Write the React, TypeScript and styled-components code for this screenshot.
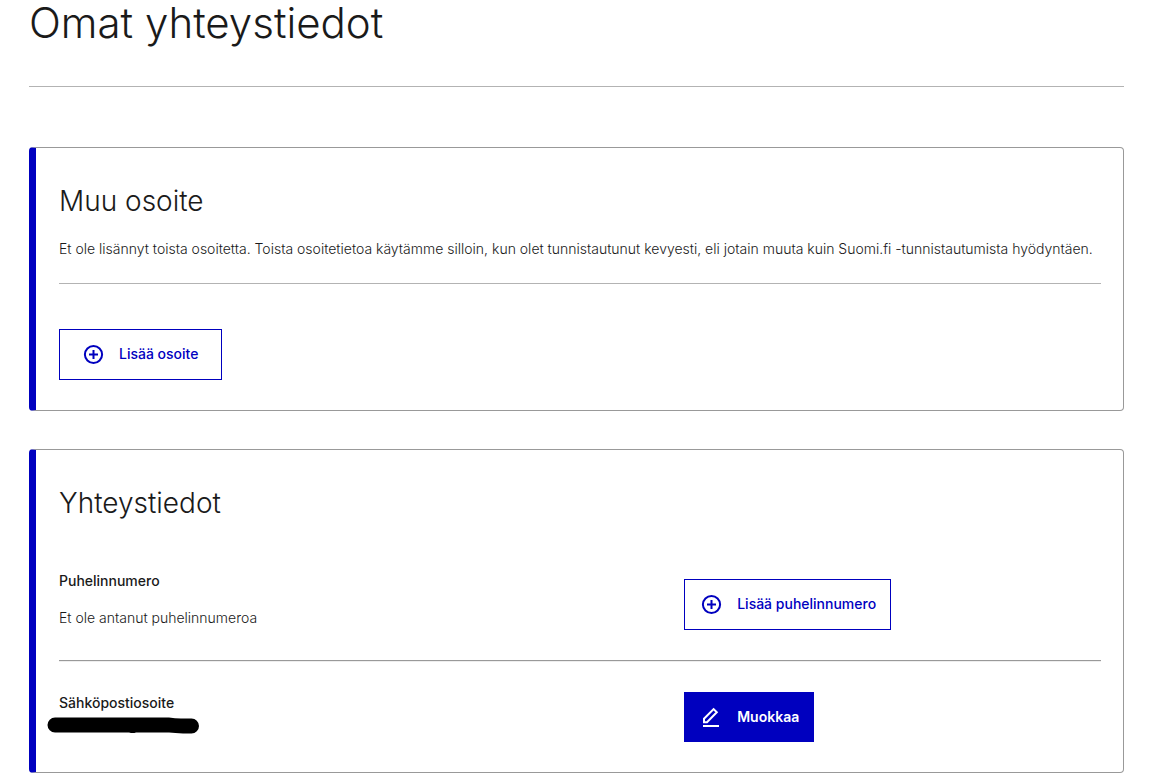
import React from "react";
import styled, { createGlobalStyle } from "styled-components";

const blue = "#0000bf";

const GlobalStyle = createGlobalStyle`
  * { box-sizing: border-box; }
  body {
    margin: 0;
    background: #fff;
    color: #1a1a1a;
    font-family: Inter, "Liberation Sans", sans-serif;
    font-size: 14px;
    line-height: 22px;
  }
`;

const Page = styled.main`
  padding: 0 28px 9px 29px;
`;

const PageTitle = styled.h1`
  margin: 0;
  padding-bottom: 40px;
  border-bottom: 1px solid #b3b3b3;
  font-size: 42px;
  font-weight: 300;
  line-height: 46px;
`;

const CardList = styled.div`
  display: flex;
  flex-direction: column;
  gap: 38px;
  margin-top: 60px;
`;

const Card = styled.section`
  padding: 36px 22px 30px 23px;
  border: 1px solid #999;
  border-left: 7px solid ${blue};
  border-radius: 4px;
`;

const CardTitle = styled.h2`
  margin: 0;
  font-size: 28px;
  font-weight: 300;
  line-height: 34px;
`;

const Intro = styled.p`
  margin: 20px 0 45px;
  padding-bottom: 23px;
  border-bottom: 1px solid #b3b3b3;
  font-weight: 300;
`;

const Row = styled.div`
  display: grid;
  grid-template-columns: 3fr 2fr;
  align-items: end;
`;

const RowList = styled.div`
  margin-top: 50px;
`;

const Divider = styled.hr`
  height: 2px;
  margin: 30px 0;
  border: 0;
  border-top: 1px solid #999;
  border-bottom: 1px solid #eee;
`;

const Field = styled.dl`
  margin: 0;
  align-self: start;
`;

const Label = styled.dt`
  font-weight: 500;
`;

const Value = styled.dd`
  margin: 15px 0 0;
  padding-bottom: 1px;
  font-weight: 300;
`;

const HiddenValue = styled.dd`
  margin: 3px 0 0 -12px;
  svg { display: block; }
`;

const Button = styled.button<{ $filled?: boolean; $wide?: boolean }>`
  display: inline-flex;
  align-items: center;
  justify-self: start;
  gap: 14px;
  height: ${(p) => (p.$filled ? 50 : 51)}px;
  padding: ${(p) => (p.$wide ? "0 23px 1px 21px" : p.$filled ? "0 14px" : "0 14px 1px")};
  border: 1px solid ${blue};
  border-radius: 0;
  background: ${(p) => (p.$filled ? blue : "#fff")};
  color: ${(p) => (p.$filled ? "#fff" : blue)};
  font: inherit;
  font-weight: ${(p) => (p.$filled ? 600 : 500)};
  cursor: pointer;
`;

const Icon = styled.svg`
  width: 24px;
  height: 24px;
  fill: none;
  stroke: currentColor;
  stroke-width: 2;
`;

const PlusIcon = () => (
  <Icon viewBox="0 0 24 24" aria-hidden="true">
    <circle cx="12.5" cy="12.5" r="8.6" />
    <path d="M12.5 8v9M8 12.5h9" />
  </Icon>
);

const PencilIcon = () => (
  <Icon viewBox="0 0 24 24" aria-hidden="true">
    <path d="M5 17.3v-3.6l9.6-9.6 3.2 3.2-9.8 10zM4 21h16" />
  </Icon>
);

export default function App() {
  return (
    <Page>
      <GlobalStyle />
      <PageTitle>Omat yhteystiedot</PageTitle>
      <CardList>
        <Card>
          <CardTitle>Muu osoite</CardTitle>
          <Intro>
            Et ole lisännyt toista osoitetta. Toista osoitetietoa käytämme silloin, kun olet
            tunnistautunut kevyesti, eli jotain muuta kuin Suomi.fi -tunnistautumista hyödyntäen.
          </Intro>
          <Button type="button" $wide>
            <PlusIcon />
            Lisää osoite
          </Button>
        </Card>
        <Card>
          <CardTitle>Yhteystiedot</CardTitle>
          <RowList>
            <Row>
              <Field>
                <Label>Puhelinnumero</Label>
                <Value>Et ole antanut puhelinnumeroa</Value>
              </Field>
              <Button type="button">
                <PlusIcon />
                Lisää puhelinnumero
              </Button>
            </Row>
            <Divider />
            <Row>
              <Field>
                <Label>Sähköpostiosoite</Label>
                <HiddenValue>
                  <svg width="152" height="17" viewBox="0 0 152 17" aria-hidden="true">
                    <path d="M8 0.5H122Q128 1.5 134 1.5H144.500A7.300 7.300 0 0 1 144.500 16.500H136Q128 16 122 15.500H89Q86 16.500 82 15.500H8A7.500 7.500 0 0 1 8 0.500Z" />
                  </svg>
                </HiddenValue>
              </Field>
              <Button type="button" $filled>
                <PencilIcon />
                Muokkaa
              </Button>
            </Row>
          </RowList>
        </Card>
      </CardList>
    </Page>
  );
}
